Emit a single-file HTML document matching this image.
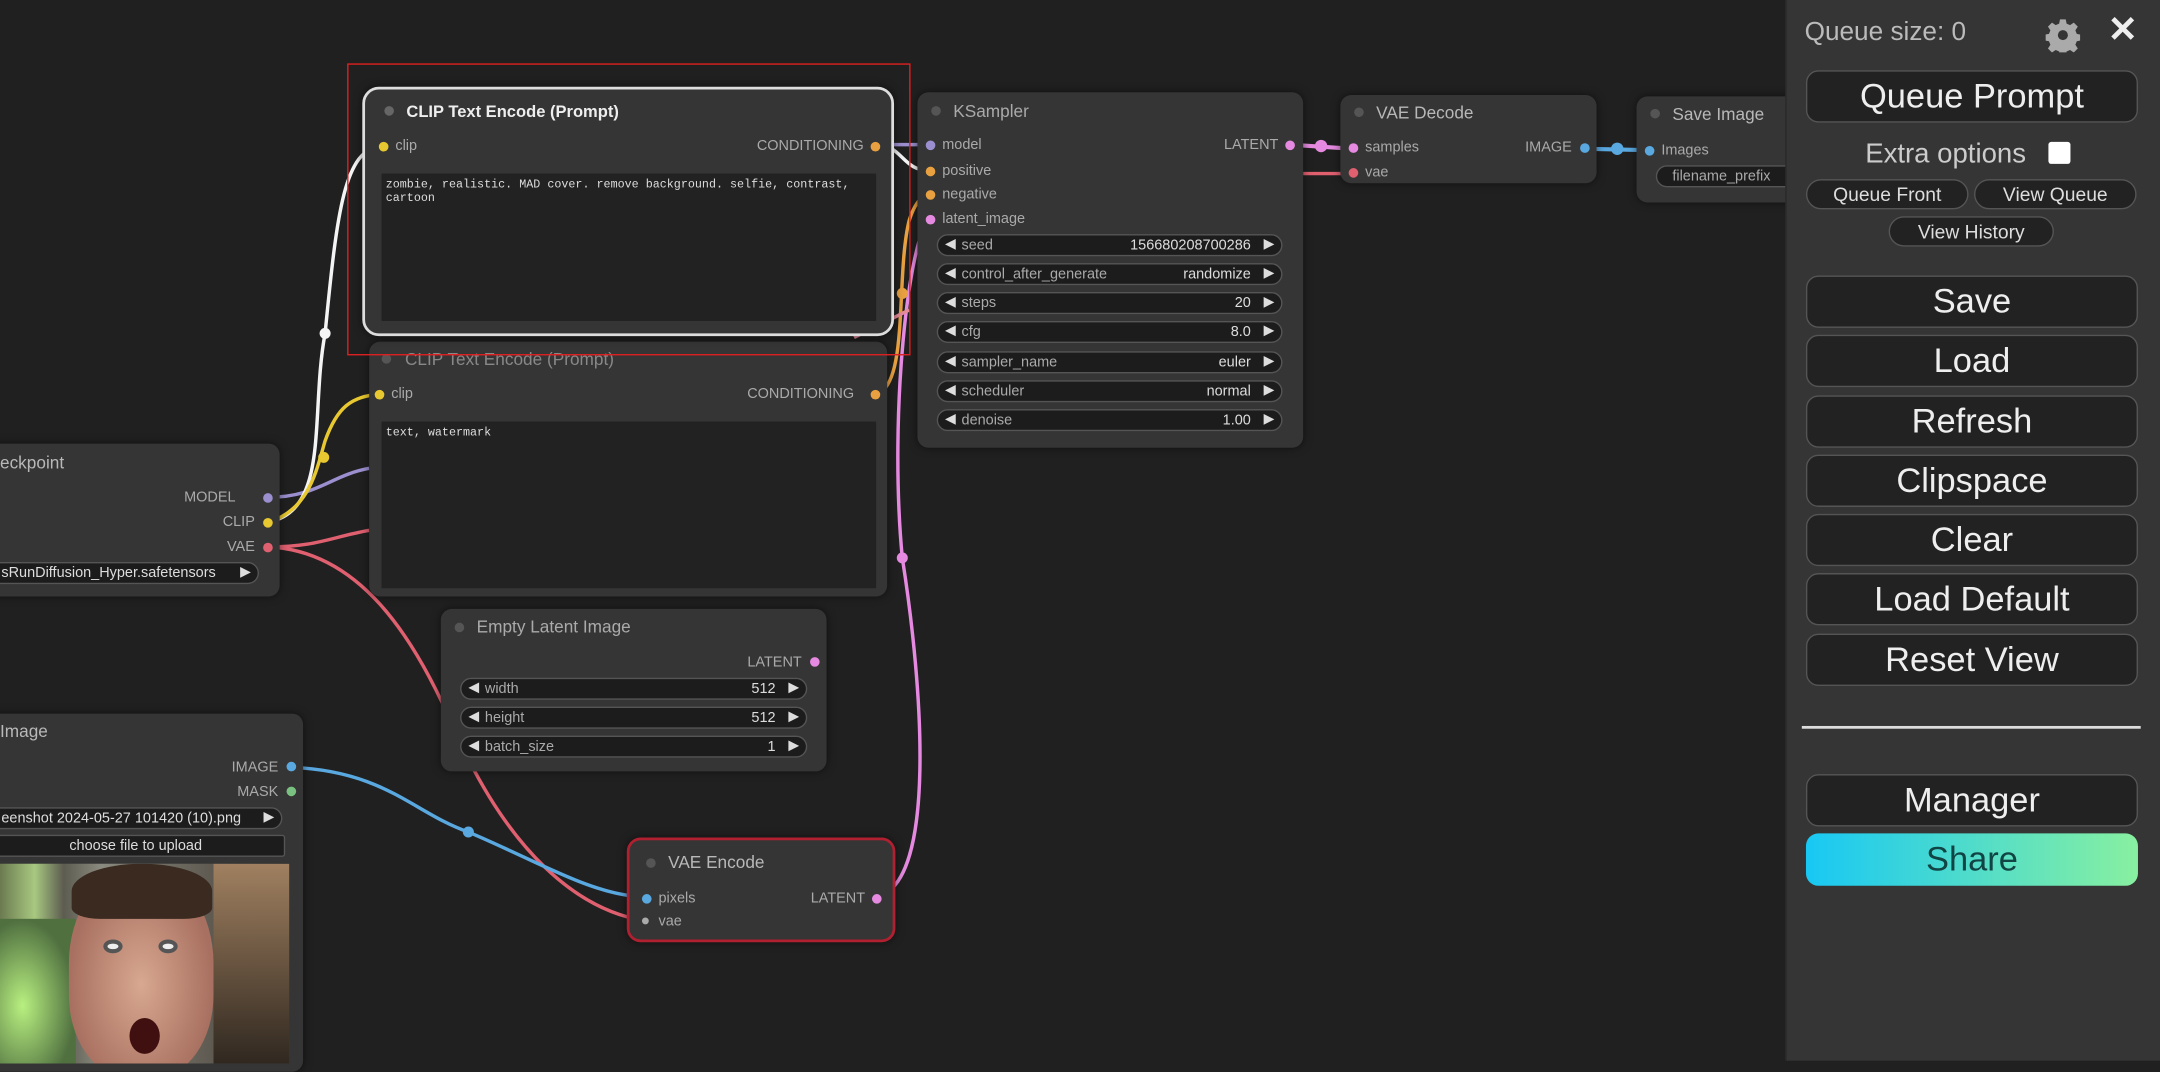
<!DOCTYPE html>
<html><head><meta charset="utf-8"><style>
*{margin:0;padding:0;box-sizing:border-box}
html,body{width:2160px;height:1060px;overflow:hidden;background:#202020}
#w{position:absolute;left:0;top:0;width:1568px;height:770px;transform:scale(1.37755);transform-origin:0 0;font-family:"Liberation Sans",sans-serif;color:#bbb}
.n{position:absolute;background:#353535;border-radius:8px;box-shadow:0 0 6px rgba(0,0,0,.5)}
.t{position:absolute;font-size:12.5px;color:#b8b8b8;white-space:nowrap}
.d{position:absolute;width:7px;height:7px;border-radius:50%}
.l{position:absolute;font-size:10.5px;color:#aaa;white-space:nowrap}
.wg{position:absolute;height:16px;background:#1c1c1c;border:1px solid #555;border-radius:8px;font-size:10.5px;color:#aaa}
.wg .a{position:absolute;left:5px;top:1px;font-size:10px;color:#ddd}
.wg .b{position:absolute;right:5px;top:1px;font-size:10px;color:#ddd}
.wg .k{position:absolute;left:17px;top:1px}
.wg .v{position:absolute;right:22px;top:1px;color:#ddd}
.ta{position:absolute;background:#222;font-family:"Liberation Mono",monospace;font-size:8.5px;color:#ddd;padding:3px;line-height:10px}
.btn{position:absolute;left:1311px;width:241px;height:38px;background:#222;border:1px solid #555;border-radius:9px;color:#eee;font-size:25px;text-align:center;line-height:36px}
.sb{position:absolute;height:22px;background:#222;border:1px solid #555;border-radius:11px;color:#ddd;font-size:14px;text-align:center;line-height:20px}
</style></head><body><div id="w">

<!-- wires behind -->
<svg width="1568" height="770" style="position:absolute;left:0;top:0">
<g fill="none" stroke-width="2.5">
<path d="M195 361 C230 361 240 345 268 340" stroke="#9c8fd0"/>
<path d="M195 397 C230 397 240 390 268 385" stroke="#e06070"/>
<path d="M195 397 C260 400 300 460 330 530 C370 620 420 660 466 668" stroke="#e06070"/>
<path d="M212 557 C280 560 300 590 340 604 C390 625 430 650 467 651" stroke="#5aa8e0"/>
<path d="M637 651 C680 640 670 500 655 405 C645 300 660 170 675 159" stroke="#e58ae0"/>
<path d="M636 286 C660 280 650 200 660 160 C665 145 670 142 675 141" stroke="#e8a040"/>
<path d="M195 379 C240 370 225 300 236 242 C245 150 250 110 277 105" stroke="#f4f4f4"/>
<path d="M195 379 C225 370 230 340 236 320 C245 295 255 288 276 286" stroke="#e8c830"/>
<path d="M636 105 C655 105 655 124 675 124" stroke="#f4f4f4"/>
<path d="M636 105 C650 105 660 105 675 105" stroke="#9c8fd0"/>
<path d="M937 105 L982 108" stroke="#e58ae0" stroke-width="3"/>
<path d="M946 126 L982 126" stroke="#e06070"/>
<path d="M1152 108 L1197 109" stroke="#5aa8e0" stroke-width="3"/>
<path d="M620 245 C640 235 650 230 660 225" stroke="#e58a9a"/>
</g>
<circle cx="236" cy="242" r="4" fill="#f4f4f4"/>
<circle cx="235" cy="332" r="4" fill="#e8c830"/>
<circle cx="655" cy="405" r="4" fill="#e58ae0"/>
<circle cx="340" cy="604" r="4" fill="#5aa8e0"/>
<circle cx="655" cy="213" r="4" fill="#e8a040"/>
<circle cx="959" cy="106" r="4.5" fill="#e58ae0"/>
<circle cx="1174" cy="108" r="4.5" fill="#5aa8e0"/>
</svg>

<!-- Checkpoint -->
<div class="n" style="left:-10px;top:322px;width:213px;height:111px">
<div class="t" style="left:10px;top:7px">eckpoint</div>
<div class="l" style="right:32px;top:33px">MODEL</div><div class="d" style="right:5px;top:36px;background:#9c8fd0"></div>
<div class="l" style="right:18px;top:51px">CLIP</div><div class="d" style="right:5px;top:54px;background:#e8c830"></div>
<div class="l" style="right:18px;top:69px">VAE</div><div class="d" style="right:5px;top:72px;background:#e06070"></div>
<div class="wg" style="left:0;top:86px;width:198px"><span class="k" style="left:10px;color:#ddd">sRunDiffusion_Hyper.safetensors</span><span class="b">▶</span></div>
</div>

<!-- CLIP 2 -->
<div class="n" style="left:268px;top:248px;width:376px;height:185px">
<div class="d" style="left:9px;top:9px;background:#555"></div>
<div class="t" style="left:26px;top:6px;color:#888">CLIP Text Encode (Prompt)</div>
<div class="d" style="left:4px;top:35px;background:#e8c830"></div><div class="l" style="left:16px;top:32px">clip</div>
<div class="l" style="right:24px;top:32px">CONDITIONING</div><div class="d" style="right:5px;top:35px;background:#e8a040"></div>
<div class="ta" style="left:9px;top:58px;width:359px;height:121px">text, watermark</div>
</div>

<!-- CLIP 1 -->
<div class="n" style="left:263px;top:63px;width:386px;height:181px;border:2px solid #ddd;border-radius:12px">
<div class="d" style="left:14px;top:12px;background:#666"></div>
<div class="t" style="left:30px;top:9px;color:#eee;font-weight:bold;font-size:12px">CLIP Text Encode (Prompt)</div>
<div class="d" style="left:10px;top:38px;background:#e8c830"></div><div class="l" style="left:22px;top:35px">clip</div>
<div class="l" style="right:20px;top:35px">CONDITIONING</div><div class="d" style="right:8px;top:38px;background:#e8a040"></div>
<div class="ta" style="left:12px;top:61px;width:359px;height:107px">zombie, realistic. MAD cover. remove background. selfie, contrast,<br>cartoon</div>
</div>
<div style="position:absolute;left:252px;top:46px;width:409px;height:212px;border:1.5px solid #e02020"></div>

<!-- KSampler -->
<div class="n" style="left:666px;top:67px;width:280px;height:258px">
<div class="d" style="left:10px;top:10px;background:#555"></div>
<div class="t" style="left:26px;top:7px;color:#aaa">KSampler</div>
<div class="d" style="left:6px;top:35px;background:#9c8fd0"></div><div class="l" style="left:18px;top:32px">model</div>
<div class="d" style="left:6px;top:54px;background:#e8a040"></div><div class="l" style="left:18px;top:51px">positive</div>
<div class="d" style="left:6px;top:71px;background:#e8a040"></div><div class="l" style="left:18px;top:68px">negative</div>
<div class="d" style="left:6px;top:89px;background:#e58ae0"></div><div class="l" style="left:18px;top:86px">latent_image</div>
<div class="l" style="right:18px;top:32px">LATENT</div><div class="d" style="right:6px;top:35px;background:#e58ae0"></div>
<div class="wg" style="left:14px;top:103px;width:251px"><span class="a">◀</span><span class="k">seed</span><span class="v">156680208700286</span><span class="b">▶</span></div>
<div class="wg" style="left:14px;top:124px;width:251px"><span class="a">◀</span><span class="k">control_after_generate</span><span class="v">randomize</span><span class="b">▶</span></div>
<div class="wg" style="left:14px;top:145px;width:251px"><span class="a">◀</span><span class="k">steps</span><span class="v">20</span><span class="b">▶</span></div>
<div class="wg" style="left:14px;top:166px;width:251px"><span class="a">◀</span><span class="k">cfg</span><span class="v">8.0</span><span class="b">▶</span></div>
<div class="wg" style="left:14px;top:188px;width:251px"><span class="a">◀</span><span class="k">sampler_name</span><span class="v">euler</span><span class="b">▶</span></div>
<div class="wg" style="left:14px;top:209px;width:251px"><span class="a">◀</span><span class="k">scheduler</span><span class="v">normal</span><span class="b">▶</span></div>
<div class="wg" style="left:14px;top:230px;width:251px"><span class="a">◀</span><span class="k">denoise</span><span class="v">1.00</span><span class="b">▶</span></div>
</div>

<!-- VAE Decode -->
<div class="n" style="left:973px;top:69px;width:186px;height:64px">
<div class="d" style="left:10px;top:9px;background:#555"></div>
<div class="t" style="left:26px;top:6px">VAE Decode</div>
<div class="d" style="left:6px;top:35px;background:#e58ae0"></div><div class="l" style="left:18px;top:32px">samples</div>
<div class="d" style="left:6px;top:53px;background:#e06070"></div><div class="l" style="left:18px;top:50px">vae</div>
<div class="l" style="right:18px;top:32px">IMAGE</div><div class="d" style="right:5px;top:35px;background:#5aa8e0"></div>
</div>

<!-- Save Image -->
<div class="n" style="left:1188px;top:70px;width:130px;height:77px">
<div class="d" style="left:10px;top:9px;background:#555"></div>
<div class="t" style="left:26px;top:6px">Save Image</div>
<div class="d" style="left:6px;top:36px;background:#5aa8e0"></div><div class="l" style="left:18px;top:33px">Images</div>
<div class="wg" style="left:14px;top:50px;width:110px"><span class="k" style="left:11px">filename_prefix</span></div>
</div>

<!-- Empty Latent -->
<div class="n" style="left:320px;top:442px;width:280px;height:118px">
<div class="d" style="left:10px;top:10px;background:#555"></div>
<div class="t" style="left:26px;top:6px;color:#aaa">Empty Latent Image</div>
<div class="l" style="right:18px;top:33px">LATENT</div><div class="d" style="right:5px;top:35px;background:#e58ae0"></div>
<div class="wg" style="left:14px;top:50px;width:252px"><span class="a">◀</span><span class="k">width</span><span class="v">512</span><span class="b">▶</span></div>
<div class="wg" style="left:14px;top:71px;width:252px"><span class="a">◀</span><span class="k">height</span><span class="v">512</span><span class="b">▶</span></div>
<div class="wg" style="left:14px;top:92px;width:252px"><span class="a">◀</span><span class="k">batch_size</span><span class="v">1</span><span class="b">▶</span></div>
</div>

<!-- Load Image -->
<div class="n" style="left:-10px;top:518px;width:230px;height:260px">
<div class="t" style="left:10px;top:6px">Image</div>
<div class="l" style="right:18px;top:33px">IMAGE</div><div class="d" style="right:5px;top:35px;background:#5aa8e0"></div>
<div class="l" style="right:18px;top:51px">MASK</div><div class="d" style="right:5px;top:53px;background:#7ac080"></div>
<div class="wg" style="left:0;top:68px;width:215px"><span class="k" style="left:10px;color:#ddd">eenshot 2024-05-27 101420 (10).png</span><span class="b">▶</span></div>
<div class="wg" style="left:0;top:88px;width:217px;border-radius:2px;text-align:center;color:#ddd;line-height:14px">choose file to upload</div>
<div style="position:absolute;left:10px;top:109px;width:210px;height:145px;overflow:hidden;background:linear-gradient(90deg,#6b7a50 0,#a8c880 12%,#5c5c50 22%,#8a8a80 35%,#403830 100%)">
<div style="position:absolute;left:0;top:40px;width:55px;height:105px;background:radial-gradient(ellipse at 30% 60%,#b8f080,#507040 70%)"></div>
<div style="position:absolute;left:50px;top:5px;width:105px;height:150px;border-radius:45% 45% 40% 40%;background:radial-gradient(ellipse at 50% 55%,#d8a890,#a87060 70%)"></div>
<div style="position:absolute;left:52px;top:0;width:102px;height:40px;border-radius:50% 50% 20% 20%;background:#3a2a20"></div>
<div style="position:absolute;left:75px;top:55px;width:14px;height:10px;border-radius:50%;background:#eee;border:3px solid #555"></div>
<div style="position:absolute;left:115px;top:55px;width:14px;height:10px;border-radius:50%;background:#eee;border:3px solid #555"></div>
<div style="position:absolute;left:94px;top:112px;width:22px;height:26px;border-radius:50%;background:#401010"></div>
<div style="position:absolute;left:155px;top:0;width:55px;height:145px;background:linear-gradient(#a08060,#302820)"></div>
</div>
</div>

<!-- VAE Encode -->
<div class="n" style="left:455px;top:608px;width:195px;height:76px;border:2px solid #b02030;border-radius:10px">
<div class="d" style="left:12px;top:13px;background:#555"></div>
<div class="t" style="left:28px;top:9px">VAE Encode</div>
<div class="d" style="left:9px;top:39px;background:#5aa8e0"></div><div class="l" style="left:21px;top:36px">pixels</div>
<div class="d" style="left:9px;top:56px;background:#aaa;width:5px;height:5px"></div><div class="l" style="left:21px;top:53px">vae</div>
<div class="l" style="right:20px;top:36px">LATENT</div><div class="d" style="right:8px;top:39px;background:#e58ae0"></div>
</div>

<!-- Side panel -->
<div style="position:absolute;left:1296px;top:0;width:272px;height:770px;background:#353535;border-left:1px solid #2a2a2a"></div>
<div style="position:absolute;left:1310px;top:13px;font-size:19px;color:#bbb">Queue size: 0</div>
<svg style="position:absolute;left:1485px;top:13px" width="25" height="25" viewBox="0 0 24 24"><path fill="#aaa" d="M10 1h4l.6 3 2.4 1 2.6-1.7 2.8 2.8-1.7 2.6 1 2.4 3 .6v4l-3 .6-1 2.4 1.7 2.6-2.8 2.8-2.6-1.7-2.4 1-.6 3h-4l-.6-3-2.4-1-2.6 1.7-2.8-2.8 1.7-2.6-1-2.4-3-.6v-4l3-.6 1-2.4L1.6 6.1l2.8-2.8 2.6 1.7 2.4-1z"/><circle cx="12" cy="12" r="3.5" fill="#353535"/></svg>
<div style="position:absolute;left:1530px;top:6px;font-size:26px;color:#eee;font-weight:bold">✕</div>
<div class="btn" style="top:51px">Queue Prompt</div>
<div style="position:absolute;left:1354px;top:101px;font-size:20px;color:#ccc">Extra options</div>
<div style="position:absolute;left:1487px;top:103px;width:16px;height:16px;background:#fff;border-radius:2px"></div>
<div class="sb" style="left:1311px;top:130px;width:118px">Queue Front</div>
<div class="sb" style="left:1433px;top:130px;width:118px">View Queue</div>
<div class="sb" style="left:1371px;top:157px;width:120px">View History</div>
<div class="btn" style="top:200px">Save</div>
<div class="btn" style="top:243px">Load</div>
<div class="btn" style="top:287px">Refresh</div>
<div class="btn" style="top:330px">Clipspace</div>
<div class="btn" style="top:373px">Clear</div>
<div class="btn" style="top:416px">Load Default</div>
<div class="btn" style="top:460px">Reset View</div>
<div style="position:absolute;left:1308px;top:527px;width:246px;height:2px;background:#ddd"></div>
<div class="btn" style="top:562px">Manager</div>
<div class="btn" style="top:605px;background:linear-gradient(90deg,#18c8f4,#88f0a0);border:none;color:#144;line-height:38px">Share</div>
</div></body></html>
